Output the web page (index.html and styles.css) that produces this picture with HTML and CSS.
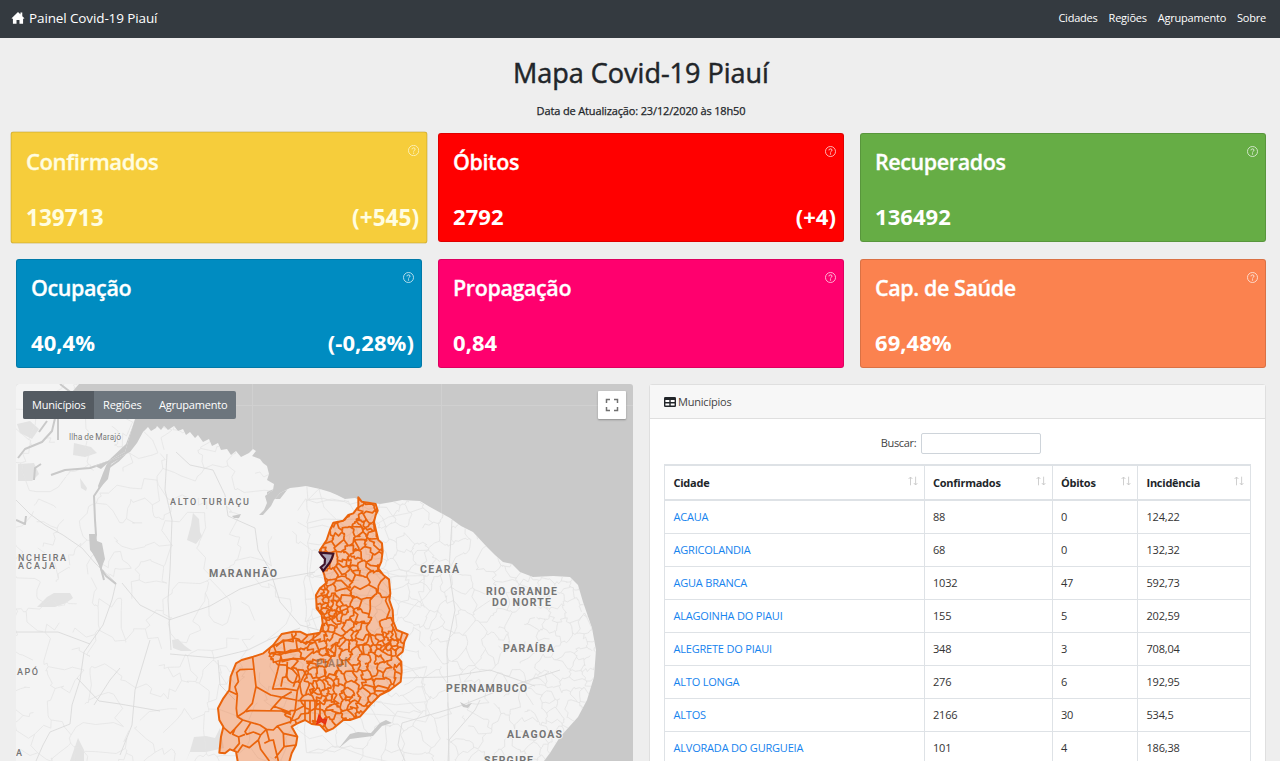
FILE: index.html
```html
<!DOCTYPE html>
<html lang="pt-br">
<head>
<meta charset="utf-8">
<title>Painel Covid-19 Piauí</title>
<link rel="stylesheet" href="styles.css">
</head>
<body>
<svg class="defs" width="0" height="0" aria-hidden="true">
  <symbol id="help" viewBox="0 0 16 16"><circle cx="8" cy="8" r="7.3" fill="none" stroke="currentColor" stroke-width="1.1"/><path d="M5.8 6.3C5.8 3.5 10.2 3.6 10.2 6.1C10.2 7.6 8 7.7 8 9.4" fill="none" stroke="currentColor" stroke-width="1.3"/><circle cx="8" cy="11.6" r=".9" fill="currentColor"/></symbol>
  <symbol id="sort" viewBox="0 0 10 10"><path d="M2.5 9.3V1M.6 3L2.5 1L4.4 3M7.6 .7V9M5.8 7L7.6 9L9.4 7" fill="none" stroke="currentColor" stroke-width=".9"/></symbol>
</svg>
<nav class="navbar">
  <a class="brand"><svg class="home" viewBox="0 0 16 16"><path fill="#fff" d="M8 1.2L15.3 8.4L14.6 9.1L13.8 8.4V14.7H9.7V10.4H6.3V14.7H2.2V8.4L1.4 9.1L.7 8.4ZM12.9 1.8V6L10.8 3.9V1.8Z"/></svg><span>Painel Covid-19 Piauí</span></a>
  <div class="links"><a>Cidades</a><a>Regiões</a><a>Agrupamento</a><a>Sobre</a></div>
</nav>
<main class="page">
  <h1 class="title">Mapa Covid-19 Piauí</h1>
  <p class="updated">Data de Atualização: 23/12/2020 às 18h50</p>
  <section class="stats">
    <div class="stat yellow active"><svg class="help"><use href="#help"/></svg><h2>Confirmados</h2><div class="values"><b>139713</b><b>(+545)</b></div></div>
    <div class="stat red"><svg class="help"><use href="#help"/></svg><h2>Óbitos</h2><div class="values"><b>2792</b><b>(+4)</b></div></div>
    <div class="stat green"><svg class="help"><use href="#help"/></svg><h2>Recuperados</h2><div class="values"><b>136492</b></div></div>
    <div class="stat blue"><svg class="help"><use href="#help"/></svg><h2>Ocupação</h2><div class="values"><b>40,4%</b><b>(-0,28%)</b></div></div>
    <div class="stat pink"><svg class="help"><use href="#help"/></svg><h2>Propagação</h2><div class="values"><b>0,84</b></div></div>
    <div class="stat orange"><svg class="help"><use href="#help"/></svg><h2>Cap. de Saúde</h2><div class="values"><b>69,48%</b></div></div>
  </section>
  <section class="content">
    <div class="map">
      <svg class="map-canvas" viewBox="16 384 617 377">
        <defs>
          <clipPath id="land"><path id="coast" d="M16 384H79L72 392L78 398L98 405L135 419L130 435L125 452L110 460L95 466L101 469L110 461L122 456L130 452L137 443L143 432L148 427L151 431L156 428L157 426L161 430L164 426L168 430L174 426L178 431L183 429L186 435L190 432L195 438L198 435L203 442L209 439L212 446L218 443L221 450L227 449L231 455L236 451L241 457L249 453L253 449L256 451L252 456L260 459L263 463L267 466L269 474L267 480L274 484L273 490L265 496L267 503L264 510L259 515L263 515L271 506L274 500L280 493L290 488L299 487L306 486L320 489L330 492L337 495L345 499L355 498L362 501L380 504L392 502L402 500L420 501L430 507L450 518L461 526L473 532L487 547L495 555L503 562L512 564L520 572L533 577L553 576L570 577L578 585L583 602L592 628L596 650L594 677L587 700L578 717L560 737L550 753L544 761H16Z"/></clipPath>
          <path id="state" d="M445 22L455 35L475 38L497 42L503 62L497 75L492 95L500 130L505 150L516 160L518 185L514 215L505 235L520 255L537 268L541 310L538 330L548 360L550 395L560 420L593 433L583 455L578 485L560 500L574 515L575 545L572 575L540 600L510 615L480 645L450 680L420 690L400 690L370 715L348 725L330 705L305 702L285 690L262 700L245 710L262 740L258 765L245 790L235 825H85L78 785L60 778L45 790L28 788L33 740L40 710L28 690L24 655L40 625L58 600L62 560L78 520L95 510L130 500L160 490L190 465L215 432L250 425L270 425L290 435L330 428L338 400L335 375L320 355L318 315L330 295L348 280L343 255L337 238L358 225L370 195L362 188L330 188V180L350 150L360 120L370 98L400 92L415 75L430 70L445 50Z"/>
          <clipPath id="stateClip"><use href="#state"/></clipPath>
        </defs>
        <rect x="16" y="384" width="617" height="377" fill="#c9c9c9"/>
        <path d="M252.500 384V761M441.500 384V761M16 405.500H633" stroke="#d0d0d0" fill="none"/>
        <use href="#coast" fill="#f4f4f4"/>
        <g clip-path="url(#land)">
          <path class="park" d="M17 424L30 421L39 429L32 439L20 433ZM18 464L34 463L39 474L32 481H18ZM74 443L91 447L97 453L85 457L73 455ZM193 513L199 519L200 532L202 536L196 544L187 540L191 525ZM80 478L87 488L86 491L81 488ZM37 607L47 597L54 593L70 593L73 598L66 603L55 607ZM172 640L178 639L185 646L192 651L181 651L173 648ZM78 738L84 750V761H70ZM194 737L206 736L215 738L220 728L224 748L206 752L190 752L186 761L190 751Z"/>
          <g id="roads"></g>
          <path class="road strong" d="M16 500L30 514L45 525L63 535L82 548L95 563L116 583L112 600L103 625L84 652L80 680L72 705L70 724L50 732L43 745L36 761M16 632L58 632L90 644M167 454L165 490L172 520L170 570L168 600L171 650M176 452L190 465L213 470L225 495L228 516L255 528L258 550L270 570L280 602L300 625L330 633M169 620L210 606L240 589L270 580L315 572M122 583L140 605L170 620M150 640L135 690L132 725L120 755M170 654L215 658L248 650L268 640L300 628M218 660L220 685L235 700M77 678L99 701L120 704L160 711M94 705L110 680L120 668M370 675L400 678L445 677L490 670L535 686M402 723L460 706L505 688L560 670M402 723L398 745L405 761M448 761L449 740L475 710L480 700M452 520L449 570L455 610L447 650L449 761"/>
          <path class="water" d="M60 384L78 398L70 410L56 414L52 431L42 442L25 449L18 458M58 412V440M47 421L39 432M34 480L35 468L41 464M51 475L65 470L90 468L114 460M129 450L118 461L108 468L102 484L94 496L95 520L96 535L92 550L100 565L104 580M16 520L25 524L26 516M102 570L106 576L116 584"/>
          <path class="water fill" d="M126 444L135 420H142L136 437L121 458L111 464L108 479L99 489L98 486L103 473L108 461ZM89 534L96 534L97 541L102 543L105 559L103 564L101 571L96 557L90 550ZM267 492L276 488L273 499L267 497ZM275 493L287 490L280 499L275 499ZM232 516L241 514L239 518L234 518ZM339 748L350 734L358 732L371 733L380 723L386 720L392 723L382 726L373 736L350 739ZM460 702L466 705L472 703L468 708L463 707Z"/>
        </g>
        <g transform="translate(210 490) scale(.33333)">
          <use href="#state" fill="#f25f0b" fill-opacity=".34"/>
          <g clip-path="url(#stateClip)">
            <g id="cells"></g>
            <path class="border" d="M128 502L138 590L127 640L104 666L82 680L79 655L82 614L58 603M82 614L75 590L85 575L80 548L90 539L130 537M213 500L202 545L188 597L225 596L262 602M138 590L182 615L220 623L257 630M108 665L120 662L215 663L243 674M182 660L215 623L245 605M190 648L242 668M82 680L98 690L75 716L61 730L40 712M98 690L150 705L169 718L152 735L130 726L110 733L105 725L122 698M75 716L68 733L86 741L105 733M86 741L88 760L70 782M152 735L145 750L118 773L98 765L82 788M145 750L152 778L178 813M169 718L190 720L202 708L243 695M169 718L178 752L163 760M178 752L190 750L205 813M202 708L220 730L222 770L195 805M220 730L262 740M222 770L258 765M188 500L198 486L190 465M198 486L210 490L217 515L250 505L265 512M232 515L230 560L218 563L213 590M198 470L220 450L250 455L245 430M220 450L225 490L262 478L258 450L290 460L330 430M265 512L245 535L262 555L250 590M262 602L255 665L240 700M262 632H330M285 632V690M300 632V700M315 632V705M330 632V690M290 540L270 580L262 602"/>
          </g>
          <use href="#state" class="outline"/>
          <path d="M330 188L370 191L366 204L359 218L340 243L332 232L344 222L345 207L336 197Z" fill="#aaa2b5" stroke="#401329" stroke-width="6.500"/>
          <path d="M320 702L327 675L337 689L350 687L346 702L334 694Z" fill="#e13b20" stroke="#e9310e" stroke-width="4"/>
        </g>
        <g class="labels">
          <text x="69" y="440" class="small" textLength="52">Ilha de Marajó</text>
          <text x="170" y="505" class="light" textLength="79">ALTO TURIAÇU</text>
          <text x="209" y="577" textLength="68">MARANHÃO</text><text x="420" y="573" textLength="39">CEARÁ</text>
          <text x="486" y="595" textLength="71">RIO GRANDE</text><text x="492" y="606" textLength="59">DO NORTE</text>
          <text x="503" y="652" textLength="51">PARAÍBA</text><text x="446" y="692" textLength="81">PERNAMBUCO</text>
          <text x="507" y="738" textLength="55">ALAGOAS</text><text x="484" y="764" textLength="49">SERGIPE</text>
          <text x="18" y="560.500" class="light" textLength="48">NCHEIRA</text><text x="18" y="569" class="light" textLength="37">ACAJA</text>
          <text x="17" y="675" class="light" textLength="21">APÓ</text><text x="16" y="756" class="light">A</text>
          <text x="316" y="667" class="under" textLength="31">PIAUÍ</text>
        </g>
      </svg>
      <div class="layers"><button class="on">Municípios</button><button>Regiões</button><button>Agrupamento</button></div>
      <div class="fullscreen"><svg viewBox="0 0 14 14"><path d="M1.500 5V1.500H5M9 1.500H12.500V5M12.500 9V12.500H9M5 12.500H1.500V9" fill="none" stroke="#707070" stroke-width="1.500"/></svg></div>
    </div>
    <div class="panel">
      <header><svg class="table-icon" viewBox="0 0 12 12"><rect y="1" width="12" height="10" rx="1.300" fill="#212529"/><path d="M1.400 4H5.300V6.100H1.400ZM6.700 4H10.600V6.100H6.700ZM1.400 7.400H5.300V9.600H1.400ZM6.700 7.400H10.600V9.600H6.700Z" fill="#fff"/></svg><span>Municípios</span></header>
      <div class="panel-body">
        <label class="search"><span>Buscar:</span><input type="text"></label>
        <table>
          <colgroup><col class="c1"><col class="c2"><col class="c3"><col class="c4"></colgroup>
          <thead><tr><th><div>Cidade<svg><use href="#sort"/></svg></div></th><th><div>Confirmados<svg><use href="#sort"/></svg></div></th><th><div>Óbitos<svg><use href="#sort"/></svg></div></th><th><div>Incidência<svg><use href="#sort"/></svg></div></th></tr></thead>
          <tbody>
            <tr><td><a>ACAUA</a></td><td>88</td><td>0</td><td>124,22</td></tr>
            <tr><td><a>AGRICOLANDIA</a></td><td>68</td><td>0</td><td>132,32</td></tr>
            <tr><td><a>AGUA BRANCA</a></td><td>1032</td><td>47</td><td>592,73</td></tr>
            <tr><td><a>ALAGOINHA DO PIAUI</a></td><td>155</td><td>5</td><td>202,59</td></tr>
            <tr><td><a>ALEGRETE DO PIAUI</a></td><td>348</td><td>3</td><td>708,04</td></tr>
            <tr><td><a>ALTO LONGA</a></td><td>276</td><td>6</td><td>192,95</td></tr>
            <tr><td><a>ALTOS</a></td><td>2166</td><td>30</td><td>534,5</td></tr>
            <tr><td><a>ALVORADA DO GURGUEIA</a></td><td>101</td><td>4</td><td>186,38</td></tr>
          </tbody>
        </table>
      </div>
    </div>
  </section>
</main>
<script src="map.js"></script>
</body>
</html>
```
FILE: map.js
```js
// Draws the municipality borders and the road network as irregular cell meshes.
let seed = 7;
const rnd = () => (seed = (seed * 16807) % 2147483647) / 2147483647;

function scatter(box, step, density) {
  const pts = [];
  for (let y = box[1]; y < box[3]; y += step)
    for (let x = box[0]; x < box[2]; x += step) {
      const px = x + rnd() * step, py = y + rnd() * step, keep = rnd();
      if (keep < density(px, py)) pts.push([px, py]);
    }
  return pts;
}

function cell(p, pts, reach) {
  let poly = [[p[0] - reach, p[1] - reach], [p[0] + reach, p[1] - reach], [p[0] + reach, p[1] + reach], [p[0] - reach, p[1] + reach]];
  for (const q of pts) {
    if (q === p || Math.hypot(q[0] - p[0], q[1] - p[1]) > reach * 2) continue;
    const nx = q[0] - p[0], ny = q[1] - p[1];
    const c = (q[0] * q[0] + q[1] * q[1] - p[0] * p[0] - p[1] * p[1]) / 2;
    const side = v => v[0] * nx + v[1] * ny - c;
    const out = [];
    poly.forEach((a, i) => {
      const b = poly[(i + 1) % poly.length], sa = side(a), sb = side(b);
      if (sa <= 0) out.push(a);
      if (sa * sb < 0) { const t = sa / (sa - sb); out.push([a[0] + t * (b[0] - a[0]), a[1] + t * (b[1] - a[1])]); }
    });
    poly = out;
  }
  return poly;
}

function mesh(pts, reach, wobble, include, skip) {
  const edges = new Map();
  for (const p of pts) {
    if (!include(p[0], p[1])) continue;
    const poly = cell(p, pts, reach);
    poly.forEach((a, i) => {
      const b = poly[(i + 1) % poly.length];
      const key = [a, b].map(v => v.map(Math.round).join()).sort().join('|');
      if (edges.has(key)) return;
      if (rnd() < skip) { edges.set(key, ''); return; }
      const len = Math.hypot(b[0] - a[0], b[1] - a[1]), w = Math.min(len * .6, wobble);
      const at = t => [a[0] + (b[0] - a[0]) * t + (rnd() - .5) * w, a[1] + (b[1] - a[1]) * t + (rnd() - .5) * w];
      edges.set(key, 'M' + [a, at(.33), at(.66), b].map(v => v.map(n => n.toFixed(1)).join(' ')).join('L'));
    });
  }
  return [...edges.values()].join('');
}

function add(id, cls, d) {
  const el = document.createElementNS('http://www.w3.org/2000/svg', 'path');
  el.setAttribute('class', cls);
  el.setAttribute('d', d);
  document.getElementById(id).appendChild(el);
}

const near = (x, y, cx, cy, r) => Math.hypot(x - cx, y - cy) < r;
const muni = scatter([230, 0, 620, 760], 15, (x, y) => {
  if (near(x, y, 365, 338, 38) || near(x, y, 520, 455, 42)) return .95;
  if (near(x, y, 415, 205, 30) || near(x, y, 425, 95, 35)) return .6;
  if (x > 455 && y > 240 && y < 410) return .08;
  if (x < 350 && y > 570) return .18;
  return .34;
});
add('cells', 'border', mesh(muni, 75, 20, (x, y) => x > 262 || (x > 250 && y < 570), .08));

const east = scatter([350, 480, 620, 780], 10, x => x > 530 ? .7 : .42);
add('roads', 'road', mesh(east, 45, 6, () => true, .22));
const west = scatter([0, 390, 360, 780], 19, () => .5);
add('roads', 'road faint', mesh(west, 70, 12, () => true, .35));
```
FILE: styles.css
```css
* { box-sizing: border-box; }
body { margin: 0; height: 761px; overflow: hidden; background: #eee; color: #212529; font-family: "Open Sans", "Noto Sans", sans-serif; font-size: 11px; }
.defs { display: block; height: 0; }
.navbar { height: 38px; background: #343a40; color: #fff; display: flex; align-items: center; justify-content: space-between; padding: 0 14px 0 11px; }
.brand { display: flex; align-items: center; gap: 4px; font-size: 13.5px; letter-spacing: -.12px; margin-top: -3px; }
.home { width: 14px; height: 14px; }
.links { display: flex; gap: 11px; font-size: 11px; letter-spacing: -.22px; margin-top: -3px; }
.page { padding: 0 14px 0 16px; }
.title { margin: 16px 0 0; height: 38px; line-height: 38px; text-align: center; font-size: 27px; font-weight: 500; letter-spacing: 0; -webkit-text-stroke: .5px #212529; }
.updated { margin: 10px 0 0; height: 31px; line-height: 18px; text-align: center; font-size: 11px; font-weight: 500; letter-spacing: -.14px; -webkit-text-stroke: .25px #212529; }
.stats { display: grid; grid-template-columns: repeat(3, 406px); grid-auto-rows: 109px; gap: 16.5px 16px; }
.stat { position: relative; color: #fff; border: 1px solid rgba(0,0,0,.13); border-radius: 3px; padding: 13px 7px 0 14px; }
.stat h2 { margin: 0; font-size: 21.5px; line-height: 30px; font-weight: 600; letter-spacing: -.4px; -webkit-text-stroke: .3px; }
.values { display: flex; justify-content: space-between; margin-top: 24px; font-size: 22px; line-height: 30px; letter-spacing: .05px; }
.help { position: absolute; right: 7px; top: 12px; width: 11px; height: 11px; opacity: .9; }
.active { transform: scale(1.027); }
.yellow { background: #f6cd3b; color: #fffde0; }
.red { background: #f00; }
.green { background: #66ad45; }
.blue { background: #008cc1; }
.pink { background: #ff006e; }
.orange { background: #fb824f; }
.content { display: grid; grid-template-columns: 617px 617px; gap: 16px; margin-top: 16.5px; height: 377px; }
.map { position: relative; border-radius: 3px; overflow: hidden; }
.map-canvas { display: block; width: 617px; height: 377px; }
.park { fill: #e3e3e3; }
.road { fill: none; stroke: #e2e2e2; stroke-width: .8; }
.road.faint { stroke: #e5e5e5; }
.road.strong { stroke: #dadada; stroke-width: .9; stroke-linejoin: round; }
.water { fill: none; stroke: #c9c9c9; stroke-width: 2; stroke-linejoin: round; }
.water.fill { fill: #c9c9c9; stroke: none; }
.border, .outline { fill: none; stroke: #ea640c; stroke-width: 5.2; stroke-linejoin: round; }
.outline { stroke-width: 6; }
.labels { font-family: Roboto, sans-serif; font-size: 10.5px; font-weight: 700; fill: #757575; stroke: #f4f4f4; stroke-width: 2px; paint-order: stroke; }
.labels .light { font-size: 9px; font-weight: 500; }
.labels .small { font-size: 8.5px; font-weight: 400; }
.labels .under { stroke: none; fill: #8f6a50; opacity: .75; }
.layers { position: absolute; left: 7px; top: 7px; height: 28px; display: flex; background: #6c757d; border-radius: 2px; overflow: hidden; }
.layers button { border: 0; margin: 0; padding: 0 8.5px 2px 9px; background: none; color: #fff; font: 11px "Open Sans", sans-serif; letter-spacing: -.2px; }
.layers .on { background: #545b62; }
.fullscreen { position: absolute; right: 7px; top: 7px; width: 28px; height: 28px; background: #fff; border-radius: 1px; box-shadow: 0 1px 2px rgba(0,0,0,.3); display: grid; place-items: center; }
.fullscreen svg { width: 14px; height: 14px; }
.panel { background: #fff; border: 1px solid #dfdfdf; border-radius: 3px 3px 0 0; height: 390px; }
.panel header { height: 34px; background: #f7f7f7; border-bottom: 1px solid #dfdfdf; display: flex; align-items: center; gap: 2px; padding-left: 14px; letter-spacing: -.2px; color: #444; }
.table-icon { width: 12px; height: 12px; }
.panel-body { padding: 14px 15px 0 14px; }
.search { display: flex; justify-content: center; align-items: center; gap: 5px; height: 21px; margin-bottom: 10px; padding-left: 8px; letter-spacing: -.35px; color: #444; }
.search span { margin-top: -2px; }
.search input { width: 120px; height: 21px; border: 1px solid #ced4da; border-radius: 2px; padding: 0; }
table { width: 586px; table-layout: fixed; border-collapse: collapse; border: 1px solid #dee2e6; color: #333; }
.c1 { width: 259.500px; } .c2 { width: 128px; } .c3 { width: 85.500px; } .c4 { width: 113px; }
th, td { border: 1px solid #dee2e6; padding: 0 9px 0 8.5px; text-align: left; height: 33px; letter-spacing: -.2px; }
th { height: 35px; border-bottom-width: 2px; border-top-width: 2px; font-weight: 700; color: #212529; padding-right: 6px; letter-spacing: -.25px; }
th div { display: flex; justify-content: space-between; align-items: center; }
th svg { width: 10px; height: 10px; color: #c9c9c9; margin-top: -4px; }
td a { color: #1683ee; }
```
